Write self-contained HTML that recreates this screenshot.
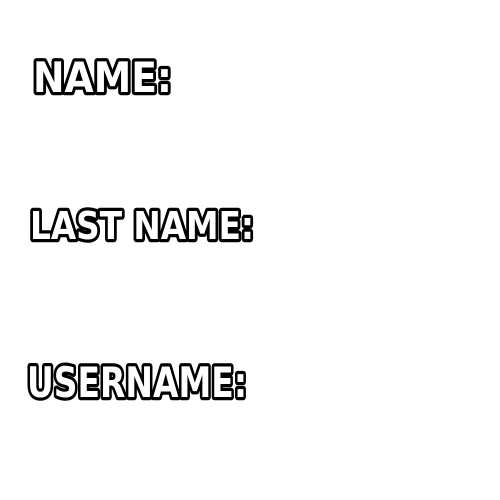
<!DOCTYPE html>
<html><head><style>html,body{margin:0;padding:0;background:#fff;width:500px;height:500px;overflow:hidden}</style></head>
<body>
<svg width="500" height="500" xmlns="http://www.w3.org/2000/svg" style="display:block">
<g font-family="'DejaVu Sans', 'Liberation Sans', sans-serif" font-weight="bold" fill="#fff" stroke="#000" stroke-width="6.5" stroke-linejoin="round" paint-order="stroke">
<text x="33" y="92" font-size="42" textLength="139" lengthAdjust="spacingAndGlyphs">NAME:</text>
<text x="30" y="239" font-size="38" textLength="224" lengthAdjust="spacingAndGlyphs">LAST NAME:</text>
<text x="27" y="397" font-size="42" textLength="220" lengthAdjust="spacingAndGlyphs">USERNAME:</text>
</g>
</svg>
</body></html>
